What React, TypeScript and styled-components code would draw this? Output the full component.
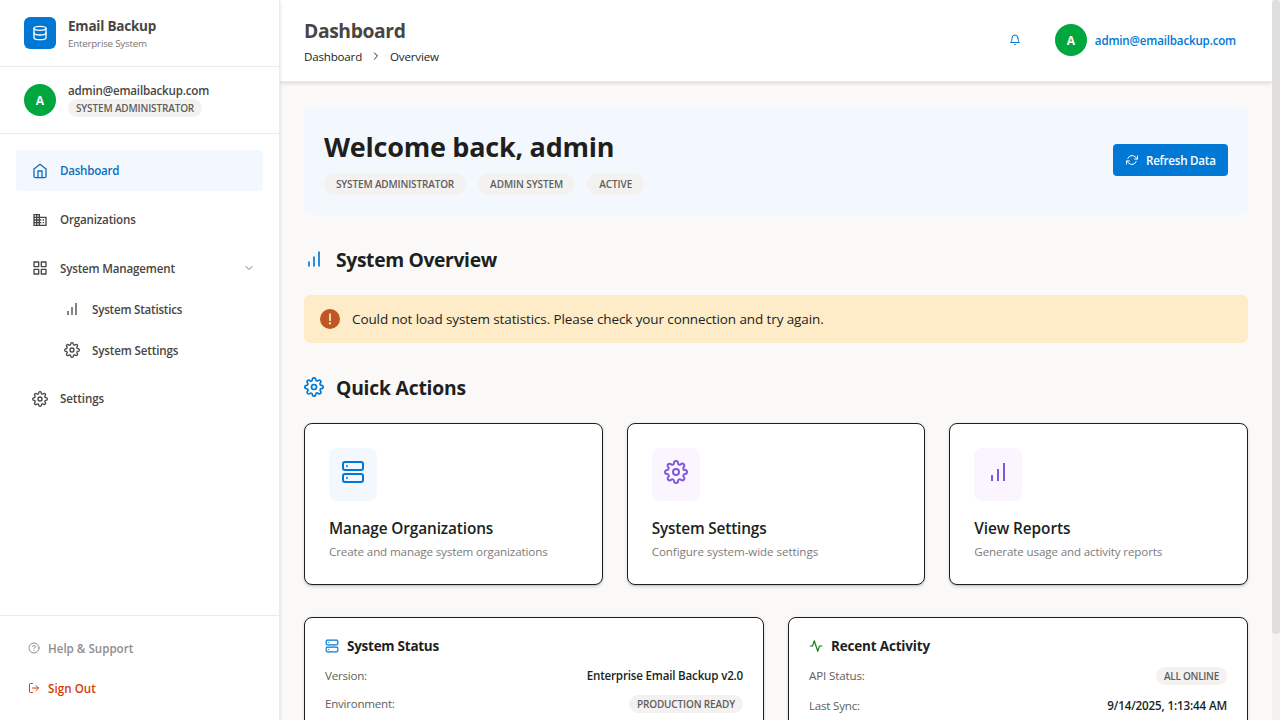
import React from 'react';
import styled, { createGlobalStyle, css } from 'styled-components';
import {
  FiActivity, FiBell, FiChevronDown, FiChevronRight, FiDatabase, FiGrid,
  FiHelpCircle, FiHome, FiLogOut, FiRefreshCw, FiServer, FiSettings,
} from 'react-icons/fi';
import { MdDomain } from 'react-icons/md';

const GlobalStyle = createGlobalStyle`
  * { box-sizing: border-box; }
  body {
    margin: 0;
    overflow: hidden;
    background: #faf9f8;
    color: #201f1e;
    font-family: 'Open Sans', 'Noto Sans', sans-serif;
  }
  h1, h2, h3, p { margin: 0; }
  button { font-family: inherit; border: 0; background: none; }
  svg { display: block; flex: none; }
`;

const Text = styled.span<{ $size: number; $weight?: number; $track?: number; $color?: string; $line?: number }>`
  display: block;
  font-size: ${(p) => p.$size}px;
  font-weight: ${(p) => p.$weight ?? 400};
  letter-spacing: ${(p) => p.$track ?? 0}px;
  color: ${(p) => p.$color ?? 'inherit'};
  line-height: ${(p) => p.$line ?? 18}px;
  white-space: nowrap;
`;

const Shell = styled.div`
  display: flex;
  height: 720px;
  width: 1280px;
`;

/* Sidebar */
const Sidebar = styled.aside`
  position: relative;
  z-index: 2;
  display: flex;
  flex-direction: column;
  width: 280px;
  flex: none;
  background: #fff;
  border-right: 1px solid #edebe9;
  box-shadow: 0 1.6px 3.6px rgba(0, 0, 0, 0.13), 0 0.3px 0.9px rgba(0, 0, 0, 0.11);
`;

const SidebarBlock = styled.div`
  display: flex;
  align-items: center;
  gap: 12px;
  height: 67px;
  padding: 0 24px;
  border-bottom: 1px solid #edebe9;
`;

const Logo = styled.div`
  display: grid;
  place-items: center;
  width: 32px;
  height: 32px;
  border-radius: 6px;
  background: #0078d4;
  color: #fff;
`;

const Avatar = styled.div`
  display: grid;
  place-items: center;
  flex: none;
  width: 32px;
  height: 32px;
  padding-top: 1px;
  border-radius: 50%;
  background: #00a63e;
  color: #fff;
  font-size: 12px;
  font-weight: 700;
  line-height: 18px;
`;

const UserInfo = styled.div`
  padding-bottom: 1px;
`;

const Badge = styled.span<{ $large?: boolean; $track?: number }>`
  display: block;
  width: fit-content;
  padding: ${(p) => (p.$large ? '0 12px' : '0 8px')};
  border-radius: 12px;
  background: #f3f2f1;
  color: #605e5c;
  font-size: 10px;
  font-weight: 600;
  letter-spacing: ${(p) => p.$track ?? 0}px;
  line-height: ${(p) => (p.$large ? 22 : 18)}px;
  white-space: nowrap;
`;

const Nav = styled.nav`
  display: flex;
  flex-direction: column;
  gap: 8px;
  flex: 1;
  padding: 16px;
`;

const SubNav = styled.div`
  display: flex;
  flex-direction: column;
  margin: -8px 0 -1px;
`;

const NavItem = styled.a<{ $active?: boolean; $nested?: boolean; $raised?: boolean }>`
  display: flex;
  align-items: center;
  gap: 12px;
  height: 41px;
  padding: 0 8px 0 ${(p) => (p.$nested ? 48 : 16)}px;
  border-radius: 4px;
  color: #484644;
  ${(p) => p.$raised && css`
    svg { margin-bottom: 2px; }
  `}
  ${(p) => p.$active && css`
    background: #f3f8ff;
    color: #106ebe;
  `}
`;

const Chevron = styled(FiChevronDown)`
  margin-left: auto;
  color: #797775;
`;

const SidebarFooter = styled.div`
  display: flex;
  flex-direction: column;
  gap: 8px;
  padding: 16px;
  border-top: 1px solid #edebe9;
`;

const FooterButton = styled.button<{ $danger?: boolean }>`
  display: flex;
  align-items: center;
  gap: 8px;
  height: 32px;
  padding: 0 12px;
  color: ${(p) => (p.$danger ? '#d83b01' : '#8f8d8b')};
  span { padding-top: 2px; }
`;

/* Main column */
const Main = styled.div`
  display: flex;
  flex-direction: column;
  flex: 1;
  min-width: 0;
  height: 720px;
  overflow: hidden;
`;

const Header = styled.header`
  display: flex;
  align-items: center;
  justify-content: space-between;
  flex: none;
  height: 82px;
  padding: 0 36px 0 24px;
  background: #fff;
  border-bottom: 1px solid #edebe9;
  box-shadow: 0 1.6px 3.6px rgba(0, 0, 0, 0.13), 0 0.3px 0.9px rgba(0, 0, 0, 0.11);
`;

const Crumbs = styled.div`
  display: flex;
  align-items: center;
  gap: 8px;
  margin-top: 2px;
  color: #201f1e;
  svg { margin-bottom: 1px; }
`;

const HeaderActions = styled.div`
  display: flex;
  align-items: center;
  gap: 34px;
  padding-bottom: 1px;
  color: #0078d4;
`;

const Account = styled.div`
  display: flex;
  align-items: center;
  gap: 8px;
  span { padding-top: 2px; }
`;

const Content = styled.main`
  flex: none;
  padding: 24px;
`;

const Hero = styled.section`
  display: flex;
  align-items: center;
  justify-content: space-between;
  height: 109px;
  padding: 20px;
  border-radius: 8px;
  background: #f3f8ff;
`;

const BadgeRow = styled.div`
  display: flex;
  gap: 12px;
  margin-top: 5px;
`;

const PrimaryButton = styled.button`
  display: flex;
  align-items: center;
  gap: 8px;
  width: 115px;
  height: 32px;
  margin-bottom: 1px;
  padding: 0 13px;
  border-radius: 4px;
  background: #0078d4;
  color: #fff;
  span { padding-top: 1px; }
`;

const SectionTitle = styled.h2`
  display: flex;
  align-items: center;
  gap: 12px;
  height: 30px;
  color: #201f1e;
  svg {
    margin-bottom: 2px;
    color: #0078d4;
  }
`;

const Section = styled.section<{ $gap: number }>`
  display: flex;
  flex-direction: column;
  gap: ${(p) => p.$gap}px;
  margin-top: 30px;
`;

const Alert = styled.div`
  display: flex;
  align-items: center;
  gap: 12px;
  height: 48px;
  padding: 0 16px;
  border-radius: 6px;
  background: #feebc8;
`;

const cardFrame = css`
  border: 1px solid #201f1e;
  border-radius: 8px;
  background: #fff;
  box-shadow: 0 1.6px 3.6px rgba(0, 0, 0, 0.13), 0 0.3px 0.9px rgba(0, 0, 0, 0.11);
`;

const Columns = styled.div<{ $count: number }>`
  display: grid;
  grid-template-columns: repeat(${(p) => p.$count}, 1fr);
  gap: 24px;
`;

const ActionCard = styled.article`
  ${cardFrame}
  height: 162px;
  padding: 24px;
`;

const IconTile = styled.div<{ $bg: string; $fg: string }>`
  width: 48px;
  height: 53px;
  margin-bottom: 16px;
  padding: 12px;
  border-radius: 8px;
  background: ${(p) => p.$bg};
  color: ${(p) => p.$fg};
`;

const InfoColumns = styled(Columns)`
  margin-top: 32px;
`;

const InfoCard = styled.article<{ $gap: number }>`
  ${cardFrame}
  display: flex;
  flex-direction: column;
  gap: ${(p) => p.$gap}px;
  height: 190px;
  padding: 17px 20px;
`;

const InfoTitle = styled.h3<{ $gap: number }>`
  display: flex;
  align-items: center;
  gap: 8px;
  height: 21px;
  margin-bottom: ${(p) => 11 - p.$gap}px;
`;

const InfoRow = styled.div`
  display: flex;
  align-items: center;
  justify-content: space-between;
  height: 18px;
`;

const ScrollTrack = styled.div`
  width: 8px;
  flex: none;
  background: #f3f2f1;
`;

const ScrollThumb = styled.div`
  height: 634px;
  border-radius: 4px;
  background: #e1dfdd;
`;

const BarsIcon = ({ size }: { size: number }) => (
  <svg width={size} height={size} viewBox="0 0 24 24" fill="none" stroke="currentColor" strokeWidth="2">
    <path d="M6 21v-6M12 21V9M18 21V3" />
  </svg>
);

const WarningIcon = () => (
  <svg width="20" height="20" viewBox="0 0 20 20" fill="none">
    <circle cx="10" cy="10" r="10" fill="#c05621" />
    <path d="M10 5v6.2" stroke="#feebc8" strokeWidth="1.7" strokeLinecap="round" />
    <circle cx="10" cy="14.4" r="1.15" fill="#feebc8" />
  </svg>
);

const ACTIONS = [
  { icon: <FiServer size={24} />, bg: '#f3f8ff', fg: '#0078d4', title: 'Manage Organizations', tt: -0.13, text: 'Create and manage system organizations', dt: -0.12 },
  { icon: <FiSettings size={24} />, bg: '#faf5ff', fg: '#805ad5', title: 'System Settings', tt: -0.17, text: 'Configure system-wide settings', dt: -0.07 },
  { icon: <BarsIcon size={24} />, bg: '#faf5ff', fg: '#805ad5', title: 'View Reports', tt: -0.1, text: 'Generate usage and activity reports', dt: -0.13 },
];

export default function App() {
  return (
    <Shell>
      <GlobalStyle />
      <Sidebar>
        <SidebarBlock>
          <Logo><FiDatabase size={16} /></Logo>
          <div>
            <Text $size={13.5} $weight={700} $track={-0.22} $color="#484644" $line={20}>Email Backup</Text>
            <Text $size={9.8} $track={-0.22} $color="#797775" $line={15}>Enterprise System</Text>
          </div>
        </SidebarBlock>
        <SidebarBlock>
          <Avatar>A</Avatar>
          <UserInfo>
            <Text $size={11.6} $weight={600} $track={-0.18} $color="#484644" $line={17}>admin@emailbackup.com</Text>
            <Badge $track={-0.15}>SYSTEM ADMINISTRATOR</Badge>
          </UserInfo>
        </SidebarBlock>
        <Nav>
          <NavItem $active>
            <FiHome size={16} />
            <Text $size={11.6} $weight={600} $track={-0.26}>Dashboard</Text>
          </NavItem>
          <NavItem>
            <MdDomain size={16} />
            <Text $size={11.6} $weight={600} $track={-0.19}>Organizations</Text>
          </NavItem>
          <NavItem $raised>
            <FiGrid size={16} />
            <Text $size={11.6} $weight={600} $track={-0.18}>System Management</Text>
            <Chevron size={12} />
          </NavItem>
          <SubNav>
            <NavItem $nested $raised>
              <BarsIcon size={16} />
              <Text $size={11.6} $weight={600} $track={-0.22}>System Statistics</Text>
            </NavItem>
            <NavItem $nested $raised>
              <FiSettings size={16} />
              <Text $size={11.6} $weight={600} $track={-0.15}>System Settings</Text>
            </NavItem>
          </SubNav>
          <NavItem>
            <FiSettings size={16} />
            <Text $size={11.6} $weight={600} $track={-0.1}>Settings</Text>
          </NavItem>
        </Nav>
        <SidebarFooter>
          <FooterButton>
            <FiHelpCircle size={12} />
            <Text $size={11.6} $weight={600}>Help &amp; Support</Text>
          </FooterButton>
          <FooterButton $danger>
            <FiLogOut size={12} />
            <Text $size={11.6} $weight={600} $track={0.05}>Sign Out</Text>
          </FooterButton>
        </SidebarFooter>
      </Sidebar>

      <Main>
        <Header>
          <div>
            <Text as="h1" $size={19.3} $weight={700} $track={-0.38} $color="#484644" $line={30}>Dashboard</Text>
            <Crumbs>
              <Text $size={11.6} $track={-0.2}>Dashboard</Text>
              <FiChevronRight size={12} />
              <Text $size={11.6} $track={-0.18}>Overview</Text>
            </Crumbs>
          </div>
          <HeaderActions>
            <FiBell size={12} />
            <Account>
              <Avatar>A</Avatar>
              <Text $size={11.6} $weight={600} $track={-0.18}>admin@emailbackup.com</Text>
            </Account>
          </HeaderActions>
        </Header>

        <Content>
          <Hero>
            <div>
              <Text as="h1" $size={27} $weight={700} $track={-0.25} $line={42}>Welcome back, admin</Text>
              <BadgeRow>
                <Badge $large $track={-0.15}>SYSTEM ADMINISTRATOR</Badge>
                <Badge $large $track={-0.08}>ADMIN SYSTEM</Badge>
                <Badge $large $track={-0.08}>ACTIVE</Badge>
              </BadgeRow>
            </div>
            <PrimaryButton>
              <FiRefreshCw size={12} />
              <Text $size={11.6} $weight={600} $track={-0.24}>Refresh Data</Text>
            </PrimaryButton>
          </Hero>

          <Section $gap={20}>
            <SectionTitle>
              <BarsIcon size={20} />
              <Text $size={19.3} $weight={700} $track={-0.35} $line={30}>System Overview</Text>
            </SectionTitle>
            <Alert>
              <WarningIcon />
              <Text $size={13.5} $track={-0.108}>Could not load system statistics. Please check your connection and try again.</Text>
            </Alert>
          </Section>

          <Section $gap={20}>
            <SectionTitle>
              <FiSettings size={20} />
              <Text $size={19.3} $weight={700} $track={-0.2} $line={30}>Quick Actions</Text>
            </SectionTitle>
            <Columns $count={3}>
              {ACTIONS.map((a) => (
                <ActionCard key={a.title}>
                  <IconTile $bg={a.bg} $fg={a.fg}>{a.icon}</IconTile>
                  <Text as="h3" $size={15.4} $weight={600} $track={a.tt} $line={24}>{a.title}</Text>
                  <Text as="p" $size={11.6} $track={a.dt} $color="#7d7b79" $line={22}>{a.text}</Text>
                </ActionCard>
              ))}
            </Columns>
          </Section>

          <InfoColumns $count={2}>
            <InfoCard $gap={10}>
              <InfoTitle $gap={10}>
                <FiServer size={14} color="#0078d4" />
                <Text $size={13.5} $weight={700} $track={-0.26}>System Status</Text>
              </InfoTitle>
              <InfoRow>
                <Text $size={11.6} $track={-0.24} $color="#605e5c">Version:</Text>
                <Text $size={11.6} $weight={600} $track={-0.19}>Enterprise Email Backup v2.0</Text>
              </InfoRow>
              <InfoRow>
                <Text $size={11.6} $track={-0.25} $color="#605e5c">Environment:</Text>
                <Badge $track={-0.14}>PRODUCTION READY</Badge>
              </InfoRow>
            </InfoCard>
            <InfoCard $gap={12}>
              <InfoTitle $gap={12}>
                <FiActivity size={14} color="#107c10" />
                <Text $size={13.5} $weight={700} $track={-0.18}>Recent Activity</Text>
              </InfoTitle>
              <InfoRow>
                <Text $size={11.6} $track={-0.14} $color="#605e5c">API Status:</Text>
                <Badge $track={-0.27}>ALL ONLINE</Badge>
              </InfoRow>
              <InfoRow>
                <Text $size={11.6} $track={-0.22} $color="#605e5c">Last Sync:</Text>
                <Text $size={11.6} $weight={600} $track={-0.13}>9/14/2025, 1:13:44 AM</Text>
              </InfoRow>
            </InfoCard>
          </InfoColumns>
        </Content>
      </Main>
      <ScrollTrack><ScrollThumb /></ScrollTrack>
    </Shell>
  );
}
